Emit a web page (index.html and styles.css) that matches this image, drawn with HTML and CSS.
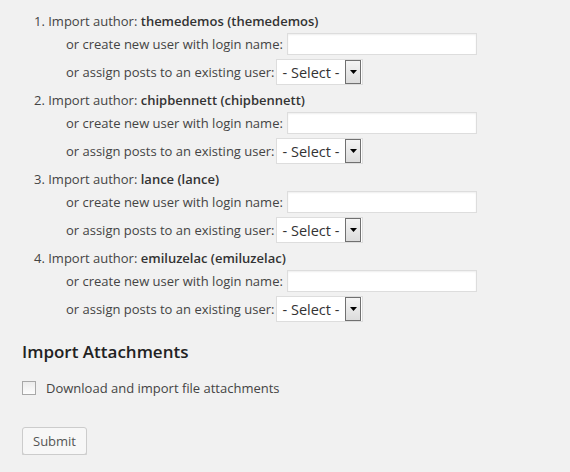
FILE: index.html
```html
<!DOCTYPE html>
<html>
<head>
<meta charset="utf-8">
<link rel="stylesheet" href="styles.css">
</head>
<body>
<div class="wrap">
  <ol class="authors">
    <li>
      <div class="title">Import author: <strong>themedemos (themedemos)</strong></div>
      <div class="row"><label>or create new user with login name:</label><input type="text" class="text"></div>
      <div class="row row-select"><label>or assign posts to an existing user:</label><span class="select"><span class="sel-text">- Select -</span><span class="sel-btn"><svg width="7" height="4" viewBox="0 0 7 4"><path d="M0 0H7L3.5 4Z" fill="#000"/></svg></span></span></div>
    </li>
    <li>
      <div class="title">Import author: <strong>chipbennett (chipbennett)</strong></div>
      <div class="row"><label>or create new user with login name:</label><input type="text" class="text"></div>
      <div class="row row-select"><label>or assign posts to an existing user:</label><span class="select"><span class="sel-text">- Select -</span><span class="sel-btn"><svg width="7" height="4" viewBox="0 0 7 4"><path d="M0 0H7L3.5 4Z" fill="#000"/></svg></span></span></div>
    </li>
    <li>
      <div class="title">Import author: <strong>lance (lance)</strong></div>
      <div class="row"><label>or create new user with login name:</label><input type="text" class="text"></div>
      <div class="row row-select"><label>or assign posts to an existing user:</label><span class="select"><span class="sel-text">- Select -</span><span class="sel-btn"><svg width="7" height="4" viewBox="0 0 7 4"><path d="M0 0H7L3.5 4Z" fill="#000"/></svg></span></span></div>
    </li>
    <li>
      <div class="title">Import author: <strong>emiluzelac (emiluzelac)</strong></div>
      <div class="row"><label>or create new user with login name:</label><input type="text" class="text"></div>
      <div class="row row-select"><label>or assign posts to an existing user:</label><span class="select"><span class="sel-text">- Select -</span><span class="sel-btn"><svg width="7" height="4" viewBox="0 0 7 4"><path d="M0 0H7L3.5 4Z" fill="#000"/></svg></span></span></div>
    </li>
  </ol>
  <h3 class="heading">Import Attachments</h3>
  <label class="check-row"><span class="checkbox"></span><span>Download and import file attachments</span></label>
  <div class="submit-row"><button class="button">Submit</button></div>
</div>
</body>
</html>
```
FILE: styles.css
```css
html, body {
  margin: 0;
  padding: 0;
  background: #f1f1f1;
}
body {
  font-family: "Open Sans", "Liberation Sans", sans-serif;
  font-size: 13px;
  color: #444;
}
.wrap {
  padding-left: 22px;
}
.authors {
  list-style: none;
  margin: 11px 0 0 12px;
  padding: 0;
  counter-reset: author;
}
.authors li {
  counter-increment: author;
  padding-bottom: 5px;
}
.title {
  line-height: 20px;
  height: 20px;
}
.title::before {
  content: counter(author) ". ";
}
.title strong {
  font-weight: 600;
  color: #333;
}
.row {
  display: flex;
  align-items: center;
  padding-left: 32px;
  gap: 4px;
}
.row-select {
  gap: 1px;
}
.row + .row {
  margin-top: 4px;
}
.title + .row {
  margin-top: 2px;
}
.text {
  box-sizing: border-box;
  width: 190px;
  height: 22px;
  margin: 0;
  border: 1px solid #ddd;
  background: #fff;
  box-shadow: inset 0 1px 2px rgba(0,0,0,0.07);
  font: inherit;
  padding: 0 4px;
}
.select {
  box-sizing: border-box;
  display: inline-flex;
  align-items: center;
  height: 26px;
  border: 1px solid #ddd;
  background: #fff;
  padding: 0 1px 0 6px;
}
.sel-text {
  font-size: 14.5px;
  color: #333;
  margin-right: 6px;
}
.sel-btn {
  box-sizing: border-box;
  width: 16px;
  height: 24px;
  border: 1px solid #707070;
  background: linear-gradient(#f4f4f4, #dcdcdc);
  display: flex;
  align-items: center;
  justify-content: center;
}
.sel-btn svg {
  display: block;
}
.heading {
  font-size: 17px;
  font-weight: 600;
  color: #222;
  line-height: 24px;
  margin: 13px 0 0 0;
}
.check-row {
  display: flex;
  align-items: center;
  margin-top: 15px;
  gap: 10px;
}
.checkbox {
  box-sizing: border-box;
  width: 14px;
  height: 14px;
  border: 1px solid #a8a8a8;
  background: linear-gradient(#ececec, #fdfdfd);
}
.submit-row {
  margin-top: 30px;
}
.button {
  box-sizing: border-box;
  height: 28px;
  padding: 0 10px;
  border: 1px solid #ccc;
  border-radius: 3px;
  background: #f7f7f7;
  box-shadow: 0 1px 0 #ccc;
  font-family: "Open Sans", "Liberation Sans", sans-serif;
  font-size: 13px;
  color: #555;
}
```
